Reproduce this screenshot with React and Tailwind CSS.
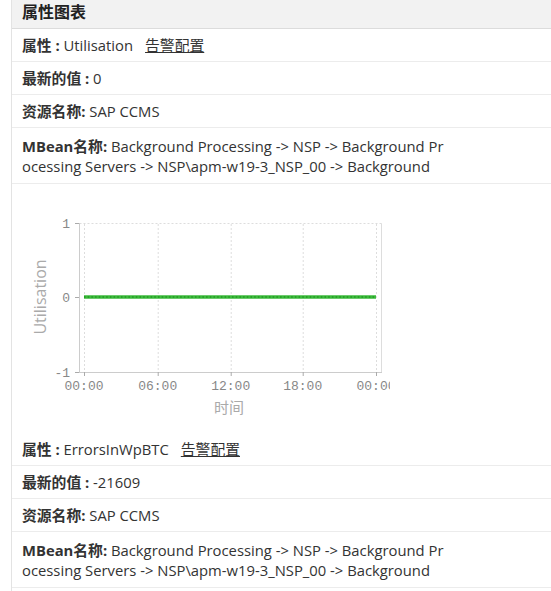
import React from "react";

const font = { fontFamily: '"Open Sans", "Noto Sans CJK SC", sans-serif' };

const Row = ({ children }) => (
  <div className="border-b border-[#ececec] px-[10px] py-[6px] leading-5 text-[14.8px] text-[#333]">
    {children}
  </div>
);

const Chart = () => {
  const xs = [72, 145.7, 218.7, 290.7, 364];
  const labels = ["00:00", "06:00", "12:00", "18:00", "00:00"];
  return (
    <div className="h-[249px]">
      <svg width="378" height="249" className="block">
        {/* plot frame */}
        <line x1="67.5" y1="39.5" x2="369.5" y2="39.5" stroke="#ddd" strokeDasharray="2,2" />
        <line x1="369.5" y1="39.5" x2="369.5" y2="188.5" stroke="#ddd" />
        {xs.map((x, i) => (
          <line key={i} x1={x + 0.5} y1="40" x2={x + 0.5} y2="188" stroke="#ddd" strokeDasharray="2,2" />
        ))}
        <line x1="67.5" y1="39" x2="67.5" y2="188.5" stroke="#ccc" />
        <line x1="67" y1="188.5" x2="370" y2="188.5" stroke="#ccc" />
        {[39.5, 113.5, 188.5].map((y, i) => (
          <line key={i} x1="63" y1={y} x2="67" y2={y} stroke="#aaa" />
        ))}
        {xs.map((x, i) => (
          <line key={i} x1={x + 0.5} y1="188" x2={x + 0.5} y2="192" stroke="#aaa" />
        ))}
        <g fill="#888" fontFamily='"Liberation Mono", monospace' fontSize="13">
          <text x="58" y="44" textAnchor="end">1</text>
          <text x="58" y="118" textAnchor="end">0</text>
          <text x="58" y="193" textAnchor="end">-1</text>
          {xs.map((x, i) => (
            <text key={i} x={x} y="206" textAnchor="middle">{labels[i]}</text>
          ))}
        </g>
        <text x="217" y="229" textAnchor="middle" fill="#aaa" fontSize="15" fontFamily='"Noto Sans CJK SC", sans-serif'>时间</text>
        <text
          x="0"
          y="0"
          transform="translate(34 113) rotate(-90)"
          textAnchor="middle"
          fill="#aaa"
          fontSize="16"
          fontFamily='"Open Sans", sans-serif'
        >
          Utilisation
        </text>
        <line x1="72" y1="113" x2="364" y2="113" stroke="#3cba3c" strokeWidth="3.5" />
        <line x1="72" y1="113" x2="364" y2="113" stroke="#1f9a1f" strokeWidth="1.5" strokeDasharray="1.5,2.2" />
      </svg>
    </div>
  );
};

const Block = ({ attr, value }) => (
  <>
    <Row>
      <b className="font-bold">属性 : </b>
      {attr}
      <a className="ml-3 underline text-[#333] cursor-pointer">告警配置</a>
    </Row>
    <Row>
      <b className="font-bold">最新的值 : </b>
      {value}
    </Row>
    <Row>
      <b className="font-bold">资源名称: </b>SAP CCMS
    </Row>
    <div className="border-b border-[#ececec] px-[10px] pt-[8px] pb-[7px] leading-5 text-[14.8px] text-[#333]">
      <div className="w-[428px] break-all">
        <b className="font-bold">MBean名称: </b>
        Background Processing -&gt; NSP -&gt; Background Processing Servers -&gt; NSP\apm-w19-3_NSP_00 -&gt; Background
      </div>
    </div>
  </>
);

export default function App() {
  return (
    <div className="w-[551px] h-[591px] overflow-hidden bg-white" style={font}>
      <div className="ml-[11px] border-l border-[#e3e3e3] min-h-[591px]">
        <div className="h-[29px] bg-[#f2f2f2] border-b border-[#dcdcdc] px-[10px] pt-[2px] leading-5 text-[16px] font-bold text-[#222]">
          属性图表
        </div>
        <Block attr="Utilisation" value="0" />
        <Chart />
        <Block attr="ErrorsInWpBTC" value="-21609" />
      </div>
    </div>
  );
}
